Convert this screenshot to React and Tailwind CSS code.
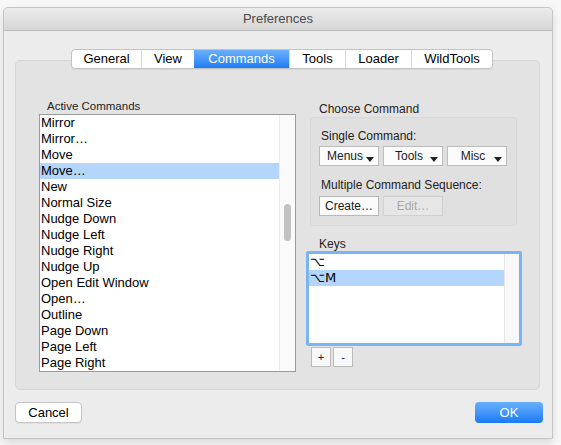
import { useState } from "react";

const commands = [
  "Mirror",
  "Mirror…",
  "Move",
  "Move…",
  "New",
  "Normal Size",
  "Nudge Down",
  "Nudge Left",
  "Nudge Right",
  "Nudge Up",
  "Open Edit Window",
  "Open…",
  "Outline",
  "Page Down",
  "Page Left",
  "Page Right",
];

const tabs = [
  { label: "General", w: "w-[69px]" },
  { label: "View", w: "w-[53px]" },
  { label: "Commands", w: "w-[95px]" },
  { label: "Tools", w: "w-[56px]" },
  { label: "Loader", w: "w-[66px]" },
  { label: "WildTools", w: "w-[81px]" },
];

const font = "font-['Liberation_Sans','DejaVu_Sans',sans-serif]";

function PopupButton({ label }) {
  return (
    <button className="relative h-[20px] w-[60px] border border-[#bcbcbc] bg-[#fbfbfb] text-[12px] leading-[18px] text-[#1a1a1a]">
      <span className="pr-[8px]">{label}</span>
      <span className="absolute right-[4px] top-[10px] h-0 w-0 border-x-[4px] border-t-[5px] border-x-transparent border-t-[#222]" />
    </button>
  );
}

export default function App() {
  const [tab, setTab] = useState("Commands");
  const [selected, setSelected] = useState("Move…");
  const [key, setKey] = useState(1);

  return (
    <div className={`${font} h-[445px] w-[561px] overflow-hidden bg-[#f7f7f7] pl-[3px] pt-[7px]`}>
      <div className="flex h-[432px] w-[550px] flex-col rounded-t-[5px] border border-[#c4c4c4] bg-[#ececec] shadow-[0_4px_10px_rgba(0,0,0,0.12)]">
        {/* title bar */}
        <div className="flex h-[23px] items-center justify-center rounded-t-[5px] border-b border-[#bdbdbd] bg-gradient-to-b from-[#ebebeb] to-[#d7d7d7] text-[13px] text-[#4a4a4a]">
          Preferences
        </div>

        <div className="flex flex-1 flex-col pl-[11px] pr-[12px] pt-[18px]">
          {/* tabs */}
          <div className="relative z-10 ml-[56px] flex h-[20px] w-fit overflow-hidden rounded-[4px] border border-[#c3c3c3] bg-white shadow-[0_1px_1px_rgba(0,0,0,0.06)]">
            {tabs.map((t, i) => (
              <button
                key={t.label}
                onClick={() => setTab(t.label)}
                className={`${t.w} text-[13px] leading-[18px] ${i > 0 ? "border-l border-[#d9d9d9]" : ""} ${
                  tab === t.label
                    ? "border-l-0 bg-gradient-to-b from-[#6ab0fb] to-[#1b7df6] text-white"
                    : "text-black"
                }`}
              >
                {t.label}
              </button>
            ))}
          </div>

          {/* tab content box */}
          <div className="-mt-[9px] flex h-[330px] items-start rounded-[5px] border border-[#d6d6d6] bg-[#e3e3e3]">
            {/* active commands */}
            <div className="ml-[23px] pt-[38px]">
              <div className="h-[15px] pl-[8px] text-[11.5px] leading-[14px] text-[#222]">Active Commands</div>
              <div className="flex h-[258px] w-[257px] border border-[#9b9b9b] bg-white">
                <div className="flex-1 overflow-hidden">
                  {commands.map((c) => (
                    <div
                      key={c}
                      onClick={() => setSelected(c)}
                      className={`h-[16px] pl-[1px] text-[13px] leading-[16px] text-black ${
                        selected === c ? "bg-[#b4d6fd]" : ""
                      }`}
                    >
                      {c}
                    </div>
                  ))}
                </div>
                <div className="flex w-[16px] justify-center border-l border-[#ececec] bg-[#fafafa] pt-[89px]">
                  <div className="h-[37px] w-[7px] rounded-full bg-[#c2c2c2]" />
                </div>
              </div>
            </div>

            {/* choose command */}
            <div className="ml-[10px] w-[216px] pt-[41px]">
              <div className="h-[15px] pl-[13px] text-[12px] leading-[14px] text-[#222]">Choose Command</div>
              <div className="ml-[4px] h-[109px] w-[207px] rounded-[4px] border border-[#d8d8d8] bg-[#e0e0e0] pl-[8px] pt-[11px]">
                <div className="h-[14px] pl-[2px] text-[12px] leading-[14px] text-[#222]">Single Command:</div>
                <div className="mt-[3px] flex gap-[4px]">
                  <PopupButton label="Menus" />
                  <PopupButton label="Tools" />
                  <PopupButton label="Misc" />
                </div>
                <div className="mt-[12px] h-[14px] pl-[2px] text-[12px] leading-[14px] text-[#222]">
                  Multiple Command Sequence:
                </div>
                <div className="mt-[4px] flex gap-[4px]">
                  <button className="h-[20px] w-[60px] border border-[#b8b8b8] bg-[#fbfbfb] text-[12px] leading-[18px] text-[#1a1a1a]">
                    Create…
                  </button>
                  <button className="h-[20px] w-[60px] border border-[#d0d0d0] bg-[#e6e6e6] text-[12px] leading-[18px] text-[#a9a9a9]">
                    Edit…
                  </button>
                </div>
              </div>

              {/* keys */}
              <div className="mt-[11px] h-[14px] pl-[13px] text-[12px] leading-[14px] text-[#222]">Keys</div>
              <div className="flex h-[95px] w-[216px] rounded-[2px] border-[3px] border-[#79b4f3] bg-white">
                <div className="flex-1 pt-[0px]">
                  {["⌥", "⌥M"].map((k, i) => (
                    <div
                      key={k}
                      onClick={() => setKey(i)}
                      className={`h-[16px] pl-[1px] font-['DejaVu_Sans','Liberation_Sans',sans-serif] text-[13px] leading-[16px] text-black ${
                        key === i ? "bg-[#b4d6fd]" : ""
                      }`}
                    >
                      {k}
                    </div>
                  ))}
                </div>
                <div className="w-[15px] border-l border-[#e6e6e6] bg-[#f8f8f8]" />
              </div>
              <div className="ml-[5px] mt-[1px] flex gap-[2px]">
                <button className="h-[20px] w-[20px] border border-[#bcbcbc] bg-[#f8f8f8] text-[11px] leading-[18px] text-[#222]">
                  +
                </button>
                <button className="h-[20px] w-[20px] border border-[#bcbcbc] bg-[#f8f8f8] text-[11px] leading-[18px] text-[#222]">
                  -
                </button>
              </div>
            </div>
          </div>

          {/* bottom buttons */}
          <div className="mt-[12px] flex justify-between pr-[-3px]">
            <button className="h-[21px] w-[67px] rounded-[4px] border border-[#c4c4c4] bg-white text-[13px] leading-[19px] text-black shadow-[0_1px_1px_rgba(0,0,0,0.05)]">
              Cancel
            </button>
            <button className="-mr-[3px] h-[21px] w-[68px] rounded-[4px] bg-gradient-to-b from-[#69b0fb] to-[#167af6] text-[13px] leading-[21px] text-white">
              OK
            </button>
          </div>
        </div>
      </div>
    </div>
  );
}
